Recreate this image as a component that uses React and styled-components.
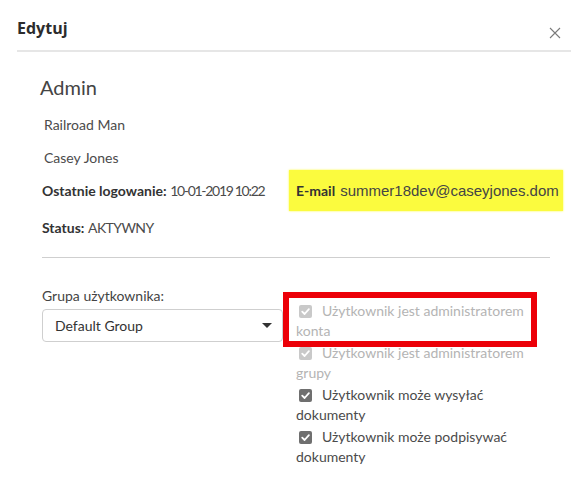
import React from "react"
import styled, { createGlobalStyle } from "styled-components"

const GlobalStyle = createGlobalStyle`
  body {
    margin: 0;
    background: #fff;
    font-family: Lato, "Open Sans", sans-serif;
    color: #4b4b4b;
  }
`

const checks = [
  { first: "Użytkownik jest administratorem", rest: "konta", disabled: true },
  { first: "Użytkownik jest administratorem", rest: "grupy", disabled: true },
  { first: "Użytkownik może wysyłać", rest: "dokumenty" },
  { first: "Użytkownik może podpisywać", rest: "dokumenty" },
]

const CheckIcon = ({ disabled }) => (
  <Box viewBox="0 0 13 13" width="13" height="13">
    <rect x="0" y="0" width="13" height="13" rx="2" fill={disabled ? "#c9c9c9" : "#6f6f6f"} />
    <path d="M3.2 6.6 L5.6 9 L9.9 4.2" fill="none" stroke="#fff" strokeWidth="1.8" strokeLinecap="round" strokeLinejoin="round" />
  </Box>
)

export default function App() {
  return (
    <>
      <GlobalStyle />
      <Dialog>
        <Header>
          <Title>Edytuj</Title>
          <Close aria-label="close">
            <svg width="12" height="12" viewBox="0 0 12 12">
              <path d="M1 1 L11 11 M11 1 L1 11" stroke="#7a7a7a" strokeWidth="1.1" fill="none" />
            </svg>
          </Close>
        </Header>

        <Body>
          <Role>Admin</Role>
          <InfoLine $indent>Railroad Man</InfoLine>
          <InfoLine $indent>Casey Jones</InfoLine>
          <InfoLine>
            <InfoCell>
              <Label>Ostatnie logowanie:</Label> <Value $tight>10-01-2019 10:22</Value>
            </InfoCell>
            <EmailBox>
              <Label>E-mail</Label>
              <EmailValue>summer18dev@caseyjones.dom</EmailValue>
            </EmailBox>
          </InfoLine>
          <InfoLine $spaced>
            <InfoCell>
              <Label>Status:</Label> <Value>AKTYWNY</Value>
            </InfoCell>
          </InfoLine>
          <Divider />

          <FormRow>
            <GroupColumn>
              <FieldLabel>Grupa użytkownika:</FieldLabel>
              <Select>
                <span>Default Group</span>
                <Caret />
              </Select>
            </GroupColumn>

            <CheckColumn>
              <Marker />
              {checks.map((c, i) => (
                <CheckItem key={i} $disabled={c.disabled}>
                  <CheckLine>
                    <CheckIcon disabled={c.disabled} />
                    {c.first}
                  </CheckLine>
                  <div>{c.rest}</div>
                </CheckItem>
              ))}
            </CheckColumn>
          </FormRow>
        </Body>
      </Dialog>
    </>
  )
}

const Dialog = styled.div`
  width: 588px;
  height: 483px;
  background: #fff;
  overflow: hidden;
`

const Header = styled.div`
  height: 50px;
  margin: 0 17px;
  padding-right: 10px;
  display: flex;
  align-items: center;
  justify-content: space-between;
  border-bottom: 2px solid #e6e6e6;
`

const Title = styled.h1`
  margin: 6px 0 0;
  font-family: "Open Sans", sans-serif;
  font-size: 16px;
  font-weight: 700;
  color: #2c2c2c;
`

const Close = styled.div`
  display: flex;
  margin-top: 16px;
`

const Body = styled.div`
  padding: 0 20px 0 42px;
`

const Role = styled.div`
  margin: 23px 0 9px -2px;
  font-size: 20px;
  line-height: 24px;
  color: #444;
`

const InfoLine = styled.div`
  height: 33px;
  margin-top: ${p => (p.$spaced ? "4px" : "0")};
  padding-left: ${p => (p.$indent ? "2px" : "0")};
  display: flex;
  align-items: center;
  font-size: 14px;
`

const InfoCell = styled.div`
  width: 247px;
  flex-shrink: 0;
  white-space: nowrap;
`

const Label = styled.span`
  font-weight: 700;
  color: #333;
`

const Value = styled.span`
  letter-spacing: ${p => (p.$tight ? "-1.3px" : "-0.6px")};
`

const EmailBox = styled.div`
  width: 274px;
  height: 41px;
  padding-left: 7px;
  box-sizing: border-box;
  display: flex;
  align-items: center;
  gap: 5px;
  background: #fbfb3e;
  box-shadow: 0 0 2px #fbfb3e;
  flex-shrink: 0;
`

const EmailValue = styled.span`
  font-family: "Liberation Sans", Arial, sans-serif;
  font-size: 15px;
  color: #444;
`

const Divider = styled.div`
  width: 508px;
  height: 1px;
  margin-top: 13px;
  background: #cfcfcf;
`

const FormRow = styled.div`
  display: flex;
  align-items: flex-start;
  gap: 13px;
`

const GroupColumn = styled.div`
  width: 241px;
  flex-shrink: 0;
  margin-top: 28px;
`

const FieldLabel = styled.div`
  font-size: 14px;
  line-height: 20px;
  margin-bottom: 3px;
  color: #444;
`

const Select = styled.div`
  height: 33px;
  box-sizing: border-box;
  border: 1px solid #cfcfcf;
  border-radius: 4px;
  padding: 0 10px 0 12px;
  display: flex;
  align-items: center;
  justify-content: space-between;
  font-size: 14px;
  color: #333;
`

const Caret = styled.span`
  width: 0;
  height: 0;
  border-left: 5px solid transparent;
  border-right: 5px solid transparent;
  border-top: 5px solid #333;
`

const CheckColumn = styled.div`
  position: relative;
  width: 240px;
  margin-top: 43px;
  display: flex;
  flex-direction: column;
  gap: 2px;
`

const Marker = styled.div`
  position: absolute;
  left: -13px;
  top: -9px;
  width: 254px;
  height: 55px;
  box-sizing: border-box;
  border: 6px solid #ec0008;
  pointer-events: none;
`

const CheckItem = styled.div`
  font-size: 14px;
  line-height: 20px;
  color: ${p => (p.$disabled ? "#b4b4b4" : "#4b4b4b")};
`

const CheckLine = styled.div`
  display: flex;
  align-items: center;
`

const Box = styled.svg`
  margin: 0 10px 0 3px;
  flex-shrink: 0;
`
